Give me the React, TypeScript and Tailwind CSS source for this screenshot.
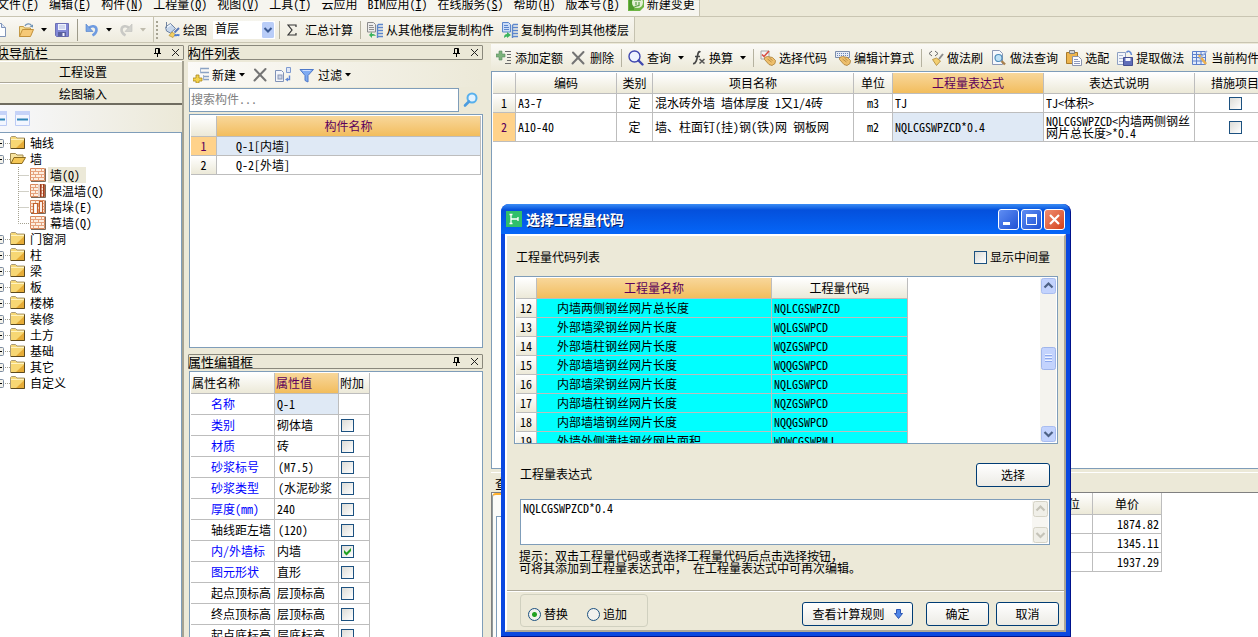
import React from "react";

/* ---------- icons ---------- */

const Svg = ({ children, w = 16, h = 16 }: { children: React.ReactNode; w?: number; h?: number }) => (
  <svg width={w} height={h} viewBox={`0 0 ${w} ${h}`} className="shrink-0" aria-hidden="true">
    {children}
  </svg>
);

const Arrow = ({ dim = false }: { dim?: boolean }) => (
  <svg width="6" height="4" viewBox="0 0 6 4" className="shrink-0" aria-hidden="true">
    <path d="M0 0h6L3 3.5z" fill={dim ? "#c0bcae" : "#000"} />
  </svg>
);

const NewIcon = () => (
  <Svg>
    <path d="M2.500 1.500h7l4 4v9h-11z" fill="#fdfeff" stroke="#7f93b8" />
    <path d="M9.500 1.500v4h4" fill="#dde6f6" stroke="#7f93b8" />
  </Svg>
);
const OpenIcon = () => (
  <Svg>
    <path d="M1.500 14.500v-10h4l1 1.500h6v3" fill="#f7dc8b" stroke="#c49a48" />
    <path d="M1.500 14.500l3-7h11l-3 7z" fill="#f6c976" stroke="#c2913a" />
    <path d="M7 4c1-2.500 5-3 6.500-.5" fill="none" stroke="#6f93b5" strokeWidth="1.300" />
    <path d="M11.500 4.500l3.500-2v3z" fill="#6f93b5" />
  </Svg>
);
const SaveIcon = () => (
  <Svg>
    <path d="M1.500 1.500h13v13h-12l-1-1z" fill="#8288d6" stroke="#6c70b4" />
    <rect x="4" y="2" width="8" height="6" fill="#eef2fc" />
    <path d="M5 4h6M5 6h6" stroke="#b4bde0" />
    <rect x="4" y="10" width="8" height="4.500" fill="#5a619f" />
    <rect x="8.500" y="11" width="2" height="3" fill="#f3f4ff" />
  </Svg>
);
const UndoIcon = ({ dim = false }: { dim?: boolean }) => (
  <Svg w={14}>
    <g transform={dim ? "translate(14 0) scale(-1 1)" : undefined}>
      <path d="M3.500 6.500C6 3 11.500 3.500 11.500 8c0 2.500-1.500 4-4 5.500" fill="none" stroke={dim ? "#c9c9c5" : "#6f9be0"} strokeWidth="2.600" />
      <path d="M1 2v7.500h7z" fill={dim ? "#d2d2cd" : "#7ba6e6"} stroke={dim ? "#c0c0bc" : "#4d7cc7"} strokeWidth=".6" />
    </g>
  </Svg>
);
const PaintIcon = () => (
  <Svg>
    <path d="M1.500 5l5-3.500 5 5-5 4.500-4-2z" fill="#c6d6ea" stroke="#6d83a4" />
    <path d="M2 6l5-3.500" stroke="#f2f7fd" strokeWidth="1.300" />
    <path d="M2.500 0v6" stroke="#70839f" />
    <path d="M10.500 10.500l4.500-4.500" stroke="#5a78b8" strokeWidth="2" />
    <path d="M5 13.500l3-3.500 3.500 2.500-2.500 3z" fill="#f2cf63" stroke="#b18c30" strokeWidth=".7" />
    <path d="M10.500 13c2 1 3-1 5 .5" stroke="#4d7cd0" strokeWidth="2" fill="none" />
  </Svg>
);
const CopyFloorIcon = ({ to = false }: { to?: boolean }) => (
  <Svg>
    <path d="M.5.500h6l2 2v7.500H.5z" fill={to ? "#c9dcf8" : "#ececec"} stroke={to ? "#5b86cc" : "#8b8b8b"} />
    <path d="M2 3.500h4M2 5.500h5M2 7.500h5" stroke={to ? "#5b86cc" : "#8d8d8d"} />
    <path d="M10.500 3v13M16 2.500h-4.500l-1 1M16 5.500h-5.500M16 8.500h-5.500M16 11.500h-5.500M16 14.500h-5.500" stroke="#5b86cc" strokeWidth="1.400" fill="none" />
    <path d={to ? "M9 13l-4-3v2c-2 0-3 1-3 4 1-1 2-1.500 3-1.500V16z" : "M2 13l3-3v2c2 0 3 .5 4 2-1-.5-2.500-.5-4 0v2z"} fill="#3bb45f" />
  </Svg>
);
const ChangeIcon = () => (
  <Svg>
    <path d="M0 0h16v11l-4 4H0z" fill="#6db544" />
    <path d="M1 1h5v13H1z" fill="#4e9a2c" />
    <circle cx="9.500" cy="6.500" r="5.500" fill="#e3f1d4" />
    <path d="M6 4h7M8 6v3M11 6v3M6.500 10.500l5-1M7 2.500h5" stroke="#3f8c26" />
  </Svg>
);
const NewComponentIcon = () => (
  <Svg>
    <path d="M7 1.500h9M7 5.500h9M10 9.500h6M10 12.500h6" stroke="#8ba3c4" strokeWidth="1.400" />
    <path d="M7.500 1v5M10.500 8v5" stroke="#9fb3cf" />
    <path d="M3 8h3v3h3v3H6v2H3v-2H0v-3h3z" fill="#f4d34b" stroke="#a98820" strokeWidth=".8" />
  </Svg>
);
const CrossIcon = ({ w = 16 }: { w?: number }) => (
  <Svg w={w}>
    <path d="M2 2.500l10.500 11M12.500 2L1.500 13.500" stroke="#747474" strokeWidth="2" strokeLinecap="round" />
  </Svg>
);
const DuplicateIcon = () => (
  <Svg>
    <path d="M.5 3.500h6l2 2v9h-8z" fill="#f4f6fb" stroke="#8093b8" />
    <rect x="3" y="8" width="4" height="4" fill="#c9d3e6" stroke="#8b98b6" />
    <path d="M11.500.500h4v5h-4z" fill="#dfe7f6" stroke="#7f9bd0" />
    <path d="M12 12.500h2.500v-4" stroke="#5f86d4" fill="none" strokeWidth="1.400" />
    <path d="M10 12.500l3-2v4z" fill="#5f86d4" />
  </Svg>
);
const FunnelIcon = () => (
  <Svg>
    <path d="M1 2.500h13.500L9 8.500v6.500l-3-1.500v-5z" fill="#7fabf2" stroke="#4f79c8" />
    <path d="M3.500 3.500h8" stroke="#cfe0ff" />
  </Svg>
);
const SearchIcon = ({ color = "#3a62b8" }: { color?: string }) => (
  <Svg>
    <circle cx="6.500" cy="6.500" r="5.500" fill="#eef4ff" stroke={color} strokeWidth="1.400" />
    <path d="M10.500 10.500l4 4" stroke={color} strokeWidth="2.400" strokeLinecap="round" />
  </Svg>
);
const SearchBoxIcon = () => (
  <Svg>
    <circle cx="9" cy="6" r="4.500" fill="#e2f2ff" stroke="#58b0ec" strokeWidth="2" />
    <path d="M6 9.500l-4 4" stroke="#4c9cdf" strokeWidth="2.600" strokeLinecap="round" />
  </Svg>
);
const AddQuotaIcon = () => (
  <Svg>
    <path d="M3 1h3v3h3v3H6v3H3V7H0V4h3z" fill="#7db27c" stroke="#5b8f63" strokeWidth=".6" />
    <path d="M9 1.500h6M11 4.500h4M11 7.500h4M11 10.500h4M9 13.500h6" stroke="#6b6b6b" />
  </Svg>
);
const FxIcon = () => (
  <Svg w={14}>
    <path d="M8.500 2C6.500 1 6 3 5.500 6S4 14 1 13.500M3 6.500h5" stroke="#474747" strokeWidth="1.700" fill="none" />
    <path d="M7.500 9l5 4.500M12.500 9l-5 4.500" stroke="#555" strokeWidth="1.600" />
  </Svg>
);
const Hand = () => (
  <g>
    <path d="M4.500 7.500l3-1 5 1 3 3-.5 3-3 2-3-1-4.500-5z" fill="#eebf6c" stroke="#a97d35" strokeWidth=".8" />
    <path d="M7.500 9l4 3M9.500 8l3 2.500" stroke="#a97d35" strokeWidth=".7" />
  </g>
);
const PickCodeIcon = () => (
  <Svg>
    <path d="M1 1h8v8H1z" fill="#f3f3f3" stroke="#a5a5a5" />
    <path d="M2 4.500l2 2 5-5.500" stroke="#d8493c" strokeWidth="1.500" fill="none" />
    <Hand />
  </Svg>
);
const EditExprIcon = () => (
  <Svg>
    <path d="M.5 1.500h14v6H.5z" fill="#e7ecf6" stroke="#7c8dab" />
    <path d="M2 3.500h11M2 5.500h11" stroke="#6d86b8" strokeDasharray="1 1" />
    <Hand />
  </Svg>
);
const BrushIcon = () => (
  <Svg>
    <path d="M4 1L1 3.500 4 6M7 1l3 2.500L7 6" stroke="#666" fill="none" />
    <path d="M15 4l-4 5" stroke="#8b8b8b" strokeWidth="2" />
    <path d="M4.500 9.500l4-1.500 4 3-4 4.500z" fill="#f3cf71" stroke="#ae8734" strokeWidth=".8" />
  </Svg>
);
const LookupIcon = () => (
  <Svg>
    <path d="M1.500.500h7l3 3v11h-10z" fill="#f6f8fd" stroke="#8b98b5" />
    <circle cx="7.500" cy="8" r="3.500" fill="#bfe1f6" stroke="#4f8cb8" strokeWidth="1.200" />
    <path d="M10.500 11l3.500 3.500" stroke="#a8814e" strokeWidth="2.400" />
  </Svg>
);
const ClipboardIcon = () => (
  <Svg>
    <path d="M.5 2.500h11v11H.5z" fill="#edb54e" stroke="#a97a2a" />
    <path d="M3.500.500h5v3h-5z" fill="#d3d3d3" stroke="#808080" />
    <path d="M6.500 6.500h6l3 3v6h-9z" fill="#fdfdff" stroke="#8a93ad" />
    <path d="M8 9.500h4M8 11.500h6M8 13.500h6" stroke="#8d99bd" />
  </Svg>
);
const ExtractIcon = () => (
  <Svg>
    <path d="M.5 2.500h8v12h-8z" fill="#f2f5fb" stroke="#8ea0c2" />
    <path d="M2 5.500h4M2 8.500h4M2 11.500h4" stroke="#a8b5d0" />
    <path d="M9.500 2.500C11 .5 14 1 14.500 5" stroke="#5f86d4" strokeWidth="1.500" fill="none" />
    <path d="M6.500 7.500h9v8h-9z" fill="#5f6db8" stroke="#434d91" />
    <path d="M8.500 8h5v3h-5z" fill="#f3f5ff" />
  </Svg>
);
const CurrentIcon = () => (
  <Svg>
    <path d="M.5 1.500h13v13H.5z" fill="#e4ecfb" stroke="#5d80cc" />
    <path d="M.5 4.500h13M.5 7.500h13M.5 11h13M4.500 1.500v13M9 1.500v13" stroke="#5d80cc" />
    <path d="M7 5l7 9" stroke="#edb04e" strokeWidth="2.600" />
    <path d="M15 1L7 9" stroke="#9db3dc" strokeWidth="1.500" />
  </Svg>
);

const FolderIcon = () => (
  <Svg>
    <path d="M.5 13.500v-11l1-1h4l1.500 1.500h7.500v10.500z" fill="#f6d878" stroke="#a89a78" />
    <path d="M1 4.500h13.500v8.500H1z" fill="#f7d774" />
    <path d="M6 13L14.500 5v8z" fill="#e6ac38" />
    <path d="M1 4.500h13" stroke="#fff3bf" />
    <path d="M1 13.500h13.500v-10" stroke="#5c4a20" fill="none" />
  </Svg>
);
const FolderOpenIcon = () => (
  <Svg>
    <path d="M.5 12.500v-10h5l1.500 1.500h6v3" fill="#f7e3a0" stroke="#a08a50" />
    <path d="M1 12.500l3-6h11.500l-3.500 6z" fill="#f4c654" stroke="#8a6a1e" />
  </Svg>
);
const WallIcon = ({ kind }: { kind: string }) => (
  <Svg>
    <path d="M.5 1.500h14v12H.5z" fill="#fdeee0" stroke="#d9885c" />
    <path d="M.5 4.500h14M.5 7.500h14M.5 10.500h14M5.500 1.500v3M11.500 1.500v3M3.500 4.500v3M8.500 4.500v3M5.500 7.500v3M11.500 7.500v3M3.500 10.500v3M8.500 10.500v3" stroke="#e5a37e" />
    <path d="M1 14.500h14.500v-13" stroke="#7b6a5a" fill="none" />
    {kind === "insulated" && (
      <g>
        <path d="M8 1h2v13H8z" fill="#e8d0c4" />
        <path d="M10 1h1.500v13H10zM13 1h1.500v13H13z" fill="#9a3a1e" />
      </g>
    )}
    {kind === "pier" && <path d="M3.500 4.500h4v10h-4zM9.500 2.500h3v11h-3z" fill="#fff" stroke="#c2602c" strokeWidth="1.200" />}
  </Svg>
);
const PinIcon = () => (
  <Svg w={9} h={9}>
    <path d="M2.500.500h4v5M2.500.500v5M5.500.500v5M1 5.500h7M4.500 5.500v3.500" stroke="#000" fill="none" />
  </Svg>
);
const CloseIcon = () => (
  <Svg w={9} h={9}>
    <path d="M1 1l7 7M8 1L1 8" stroke="#222" />
  </Svg>
);

/* ---------- shared controls ---------- */

const Check = ({ checked = false, label }: { checked?: boolean; label: string }) => (
  <span className="relative block size-[13px] shrink-0">
    <input
      type="checkbox"
      defaultChecked={checked}
      aria-label={label}
      className="peer block size-[13px] appearance-none border border-[#1c5180] bg-linear-to-br from-[#dcdcd7] to-white"
    />
    <svg viewBox="0 0 13 13" className="pointer-events-none absolute inset-0 hidden size-[13px] peer-checked:block" aria-hidden="true">
      <path d="M3 5v3l2.500 2.500L10 6V3L5.500 7.500z" fill="#21a121" />
    </svg>
  </span>
);

const Sep = () => <span className="-ml-px -mr-0.5 h-[18px] w-px shrink-0 bg-[#b5b2a0]" />;

const Tool = ({ icon, text, menu }: { icon: React.ReactNode; text: string; menu?: "near" | "far" }) => (
  <button type="button" className="flex shrink-0 items-center gap-[3px]">
    {icon}
    <span>{text}</span>
    {menu && (
      <span className={menu === "far" ? "ml-1" : ""}>
        <Arrow />
      </span>
    )}
  </button>
);

const PanelTitle = ({ text, cut = false }: { text: string; cut?: boolean }) => (
  <header className="flex h-[15px] shrink-0 items-center justify-between rounded-[1px] border border-[#8a887c] bg-[#ebe8d7] pr-[3px]">
    <h2 className={cut ? "-ml-[5px] text-[13px] leading-[13px]" : "-ml-px text-[13px] leading-[13px]"}>{text}</h2>
    <span className="flex items-center gap-[9px]">
      <button type="button" aria-label="固定">
        <PinIcon />
      </button>
      <button type="button" aria-label="关闭">
        <CloseIcon />
      </button>
    </span>
  </header>
);

const HEAD = "border-r border-b border-[#bdbdbd] bg-linear-to-b from-white to-[#ece9d8] p-0 font-normal";
const HEAD_ACTIVE = "border-r border-b border-[#bdbdbd] bg-linear-to-b from-[#f8d79a] to-[#f2bd5c] p-0 font-normal text-[#5c005c]";
const CELL = "border-r border-b border-[#bdbdbd] p-0";
const ROWNO = "border-r border-b border-[#bdbdbd] bg-linear-to-b from-white to-[#ece9d8] p-0 text-center font-normal";
const ROWNO_ACTIVE = "border-r border-b border-[#bdbdbd] bg-[#ffd28a] p-0 text-center font-normal text-[#5c005c]";
const TABLE = "table-fixed border-separate border-spacing-0";

/* ---------- data ---------- */

const menus: [string, string][] = [
  ["文件", "F"],
  ["编辑", "E"],
  ["构件", "N"],
  ["工程量", "Q"],
  ["视图", "V"],
  ["工具", "T"],
  ["云应用", ""],
  ["BIM应用", "I"],
  ["在线服务", "S"],
  ["帮助", "H"],
  ["版本号", "B"],
];

type Node = { name: string; children?: { name: string; kind: string; selected?: boolean }[] };
const tree: Node[] = [
  { name: "轴线" },
  {
    name: "墙",
    children: [
      { name: "墙(Q)", kind: "wall", selected: true },
      { name: "保温墙(Q)", kind: "insulated" },
      { name: "墙垛(E)", kind: "pier" },
      { name: "幕墙(Q)", kind: "wall" },
    ],
  },
  { name: "门窗洞" },
  { name: "柱" },
  { name: "梁" },
  { name: "板" },
  { name: "楼梯" },
  { name: "装修" },
  { name: "土方" },
  { name: "基础" },
  { name: "其它" },
  { name: "自定义" },
];

type Prop = { name: string; value: string; blue: boolean; check?: boolean };
const props: Prop[] = [
  { name: "名称", value: "Q-1", blue: true },
  { name: "类别", value: "砌体墙", blue: true, check: false },
  { name: "材质", value: "砖", blue: true, check: false },
  { name: "砂浆标号", value: "(M7.5)", blue: true, check: false },
  { name: "砂浆类型", value: "(水泥砂浆", blue: true, check: false },
  { name: "厚度(mm)", value: "240", blue: true, check: false },
  { name: "轴线距左墙", value: "(120)", blue: false, check: false },
  { name: "内/外墙标", value: "内墙", blue: true, check: true },
  { name: "图元形状", value: "直形", blue: true, check: false },
  { name: "起点顶标高", value: "层顶标高", blue: false, check: false },
  { name: "终点顶标高", value: "层顶标高", blue: false, check: false },
  { name: "起点底标高", value: "层底标高", blue: false, check: false },
];

const quotas = [
  { code: "A3-7", name: "混水砖外墙 墙体厚度 1又1/4砖", unit: "m3", expr: "TJ", note: "TJ<体积>" },
  { code: "A10-40", name: "墙、柱面钉(挂)钢(铁)网 钢板网", unit: "m2", expr: "NQLCGSWPZCD*0.4", note: "NQLCGSWPZCD<内墙两侧钢丝网片总长度>*0.4" },
];

const codes: [number, string, string][] = [
  [12, "内墙两侧钢丝网片总长度", "NQLCGSWPZCD"],
  [13, "外部墙梁钢丝网片长度", "WQLGSWPCD"],
  [14, "外部墙柱钢丝网片长度", "WQZGSWPCD"],
  [15, "外部墙墙钢丝网片长度", "WQQGSWPCD"],
  [16, "内部墙梁钢丝网片长度", "NQLGSWPCD"],
  [17, "内部墙柱钢丝网片长度", "NQZGSWPCD"],
  [18, "内部墙墙钢丝网片长度", "NQQGSWPCD"],
  [19, "外墙外侧满挂钢丝网片面积", "WQWCGSWPMJ"],
];

const prices = ["1874.82", "1345.11", "1937.29"];

/* ---------- regions ---------- */

const MenuBar = () => (
  <nav className="flex h-[17px] shrink-0 border-b border-[#c9c5b2]">
    <div className="flex shrink-0 gap-2 overflow-hidden border-r border-[#c5c2b0] bg-[#f6f5ef] pr-1">
      <ul className="-ml-[3px] -mt-1 flex shrink-0 gap-[10px]">
        {menus.map(([name, key]) => (
          <li key={name}>
            <button type="button" className="leading-4">
              {name}
              {key && (
                <>
                  (<u>{key}</u>)
                </>
              )}
            </button>
          </li>
        ))}
      </ul>
      <button type="button" className="-mt-1 flex h-4 shrink-0 items-center gap-[3px] leading-4">
        <ChangeIcon />
        新建变更
      </button>
    </div>
  </nav>
);

const MainToolbar = () => (
  <div className="flex h-[26px] shrink-0 border-b border-[#c9c5b2]">
    <div className="flex w-[154px] shrink-0 items-center overflow-hidden border-r border-[#c5c2b0] bg-linear-to-b from-[#faf9f5] to-[#eeebdd]">
      <button type="button" aria-label="新建" className="-ml-2">
        <NewIcon />
      </button>
      <button type="button" aria-label="打开" className="ml-[10px] flex items-center gap-[7px]">
        <OpenIcon />
        <Arrow />
      </button>
      <button type="button" aria-label="保存" className="ml-[7px]">
        <SaveIcon />
      </button>
      <span className="ml-[7px] h-[22px] w-px bg-[#9d9a8a]" />
      <button type="button" aria-label="撤销" className="ml-[7px] flex items-center gap-[7px]">
        <UndoIcon />
        <Arrow />
      </button>
      <button type="button" aria-label="重做" className="ml-[7px] flex items-center gap-[7px]">
        <UndoIcon dim />
        <Arrow dim />
      </button>
    </div>
    <div className="flex shrink-0 items-center gap-2 border-r border-[#c5c2b0] bg-linear-to-b from-[#f7f6f0] to-[#eeebdd] pl-0.5 pr-[5px]">
      <span className="-mr-0.5 h-[18px] border-l-2 border-dotted border-[#a7a493]" />
      <Tool icon={<PaintIcon />} text="绘图" />
      <span className="relative -ml-0.5 flex">
        <select aria-label="楼层" className="h-[18px] w-[62px] appearance-none bg-white pb-[3px] pl-0.5 leading-[14px]">
          <option>首层</option>
        </select>
        <svg width="12" height="16" viewBox="0 0 12 16" className="pointer-events-none absolute right-px top-px" aria-hidden="true">
          <rect width="12" height="16" rx="1.500" fill="#b9cdf8" />
          <path d="M2.500 6L6 9.500 9.500 6" stroke="#3b5a94" strokeWidth="2" fill="none" />
        </svg>
      </span>
      <span className="-ml-1 -mr-px h-[18px] w-px bg-[#b5b2a0]" />
      <button type="button" className="flex items-center gap-2">
        <Svg w={10} h={12}>
          <path d="M9 3V1H1l4 5-4 5h8V9" stroke="#333" strokeWidth="1.200" fill="none" />
        </Svg>
        汇总计算
      </button>
      <Sep />
      <Tool icon={<CopyFloorIcon />} text="从其他楼层复制构件" />
      <Tool icon={<CopyFloorIcon to />} text="复制构件到其他楼层" />
    </div>
  </div>
);

const Expander = ({ open }: { open: boolean }) => (
  <svg width="15" height="16" viewBox="0 0 15 16" className="-ml-[5px] shrink-0" aria-hidden="true">
    <rect x=".5" y="4.500" width="8" height="8" rx="1" fill="#f4f2ea" stroke="#7b8ba0" />
    <path d={open ? "M2 8.500h5" : "M2 8.500h5M4.500 6v5"} stroke="#000" />
    <path d="M10 8.500h5" stroke="#a3a08f" strokeDasharray="1 1" />
  </svg>
);

const NavPanel = () => (
  <aside className="flex w-[184px] shrink-0 flex-col pt-[2px]">
    <PanelTitle text="块导航栏" cut />
    <div className="mt-px flex grow flex-col overflow-hidden border-r-2 border-[#a5a292]">
      <button type="button" className="h-[22px] shrink-0 border-b border-[#aca899] border-t border-t-white bg-[#ece9d8] pr-4">
        工程设置
      </button>
      <button type="button" className="h-[22px] shrink-0 border-b-2 border-[#6f6c60] border-t border-t-white bg-[#ece9d8] pr-4">
        绘图输入
      </button>
      <div className="flex h-[28px] shrink-0 items-center gap-2 border-b border-[#7f9db9] bg-linear-to-r from-[#f7f8fc] to-[#ece9d8]">
        {["全部展开", "全部折叠"].map((label, i) => (
          <button key={label} type="button" aria-label={label} className={i === 0 ? "-ml-2" : ""}>
            <Svg w={15} h={15}>
              <path d="M.5.500h14v14H.5z" fill="#f3f6ff" stroke="#bccbf5" />
              <path d="M0 0h15v4H0z" fill="#c6d3f8" />
              <path d="M2 8.500h11" stroke="#2f86b8" strokeWidth="2" />
            </Svg>
          </button>
        ))}
      </div>
      <ul className="grow border-r border-[#7f9db9] bg-white pt-[2px]">
        {tree.map((node) => (
          <li key={node.name}>
            <div className="flex h-4 items-center">
              <Expander open={!!node.children} />
              {node.children ? <FolderOpenIcon /> : <FolderIcon />}
              <span className="ml-1">{node.name}</span>
            </div>
            {node.children && (
              <ul className="ml-[18px]">
                {node.children.map((c, i) => (
                  <li key={c.name} className="flex h-4 items-center">
                    <svg width="12" height="16" viewBox="0 0 12 16" className="shrink-0" aria-hidden="true">
                      <path d={i === 3 ? "M.5 0v8.500H11" : "M.5 0v16M.5 8.500H11"} stroke="#a3a08f" strokeDasharray="1 1" fill="none" />
                    </svg>
                    <WallIcon kind={c.kind} />
                    <span className={c.selected ? "ml-0.5 bg-[#ece9d8] pl-0.5 pr-1.5 leading-4" : "ml-1 leading-4"}>{c.name}</span>
                  </li>
                ))}
              </ul>
            )}
          </li>
        ))}
      </ul>
    </div>
  </aside>
);

const ComponentPanel = () => (
  <section className="flex w-[295px] shrink-0 flex-col pt-[2px]">
    <PanelTitle text="构件列表" />
    <div className="mt-0.5 flex h-[25px] shrink-0 items-center gap-2 bg-linear-to-r from-[#fbfaf7] to-[#ece9d8] pl-[5px]">
      <Tool icon={<NewComponentIcon />} text="新建" menu="near" />
      <button type="button" aria-label="删除">
        <CrossIcon w={14} />
      </button>
      <button type="button" aria-label="复制">
        <DuplicateIcon />
      </button>
      <Tool icon={<FunnelIcon />} text="过滤" menu="near" />
    </div>
    <div className="mt-px flex h-[24px] shrink-0">
      <input
        type="text"
        aria-label="搜索构件"
        placeholder="搜索构件..."
        className="ml-px w-[270px] border border-[#7f9db9] bg-white px-px pb-[3px] placeholder:text-[#808080]"
      />
      <button type="button" aria-label="搜索" className="flex grow items-center justify-center">
        <SearchBoxIcon />
      </button>
    </div>
    <div className="ml-px mt-[2px] h-[234px] shrink-0 border border-[#7f9db9] bg-white p-px">
      <table className={`${TABLE} w-full`}>
        <colgroup>
          <col className="w-[26px]" />
          <col />
        </colgroup>
        <thead>
          <tr className="h-[21px]">
            <th className={HEAD} />
            <th className={HEAD_ACTIVE}>构件名称</th>
          </tr>
        </thead>
        <tbody>
          <tr className="h-[19px]">
            <th className={ROWNO_ACTIVE}>1</th>
            <td className={`${CELL} bg-[#dfe9f5] pl-[19px]`}>Q-1[内墙]</td>
          </tr>
          <tr className="h-[19px]">
            <th className={ROWNO}>2</th>
            <td className={`${CELL} pl-[19px]`}>Q-2[外墙]</td>
          </tr>
        </tbody>
      </table>
    </div>
    <div className="h-[6px] shrink-0" />
    <PanelTitle text="属性编辑框" />
    <div className="ml-px mt-0.5 min-h-0 grow overflow-hidden border border-b-0 border-[#7f9db9] bg-white p-px">
      <table className={`${TABLE} w-[179px]`}>
        <colgroup>
          <col className="w-[84px]" />
          <col className="w-[64px]" />
          <col className="w-[31px]" />
        </colgroup>
        <thead>
          <tr className="h-[21px]">
            <th className={`${HEAD} pl-px text-left`}>属性名称</th>
            <th className={`${HEAD_ACTIVE} pl-px text-left`}>属性值</th>
            <th className={`${HEAD} pl-px text-left`}>附加</th>
          </tr>
        </thead>
        <tbody>
          {props.map((p, i) => (
            <tr key={p.name} className="h-[21px]">
              <td className={`${CELL} whitespace-nowrap pl-5 ${p.blue ? "text-[#0000ff]" : ""}`}>{p.name}</td>
              <td className={`${CELL} whitespace-nowrap ${p.value.startsWith("(") ? "pl-[3px]" : "pl-0.5"} ${i === 0 ? "bg-[#dfe9f5]" : ""}`}>{p.value}</td>
              <td className={`${CELL} pl-0.5`}>{p.check !== undefined && <Check checked={p.check} label={`${p.name}附加`} />}</td>
            </tr>
          ))}
        </tbody>
      </table>
    </div>
  </section>
);

const QuotaPanel = () => (
  <section className="flex min-w-0 grow flex-col pt-px">
    <div className="flex h-[27px] shrink-0 items-center gap-2 overflow-hidden bg-linear-to-b from-[#fbfaf7] to-[#ece9d8] pl-[5px]">
      <Tool icon={<AddQuotaIcon />} text="添加定额" />
      <Tool icon={<CrossIcon />} text="删除" />
      <Sep />
      <Tool icon={<SearchIcon color="#4048b0" />} text="查询" menu="far" />
      <Tool icon={<FxIcon />} text="换算" menu="far" />
      <Sep />
      <Tool icon={<PickCodeIcon />} text="选择代码" />
      <Tool icon={<EditExprIcon />} text="编辑计算式" />
      <Sep />
      <Tool icon={<BrushIcon />} text="做法刷" />
      <Tool icon={<LookupIcon />} text="做法查询" />
      <Tool icon={<ClipboardIcon />} text="选配" />
      <Tool icon={<ExtractIcon />} text="提取做法" />
      <Tool icon={<CurrentIcon />} text="当前构件" />
    </div>
    <div className="min-h-0 grow overflow-hidden border border-r-0 border-[#7f9db9] bg-white pl-px pt-px">
      <table className={`${TABLE} w-[783px]`}>
        <colgroup>
          <col className="w-[23px]" />
          <col className="w-[101px]" />
          <col className="w-[36px]" />
          <col className="w-[201px]" />
          <col className="w-[39px]" />
          <col className="w-[151px]" />
          <col className="w-[151px]" />
          <col className="w-[81px]" />
        </colgroup>
        <thead>
          <tr className="h-[21px]">
            <th className={HEAD} />
            <th className={HEAD}>编码</th>
            <th className={HEAD}>类别</th>
            <th className={HEAD}>项目名称</th>
            <th className={HEAD}>单位</th>
            <th className={HEAD_ACTIVE}>工程量表达式</th>
            <th className={HEAD}>表达式说明</th>
            <th className={HEAD}>措施项目</th>
          </tr>
        </thead>
        <tbody>
          {quotas.map((q, i) => (
            <tr key={q.code} className={i === 0 ? "h-[19px]" : "h-[29px]"}>
              <th className={i === 1 ? ROWNO_ACTIVE : ROWNO}>{i + 1}</th>
              <td className={`${CELL} pl-0.5`}>{q.code}</td>
              <td className={`${CELL} text-center`}>定</td>
              <td className={`${CELL} whitespace-nowrap pl-0.5`}>{q.name}</td>
              <td className={`${CELL} text-center`}>{q.unit}</td>
              <td className={`${CELL} pl-0.5 ${i === 1 ? "bg-[#dfe9f5]" : ""}`}>{q.expr}</td>
              <td className={`${CELL} break-all pl-0.5 leading-3`}>{q.note}</td>
              <td className={CELL}>
                <span className="flex justify-center">
                  <Check label={`${q.code}措施项目`} />
                </span>
              </td>
            </tr>
          ))}
        </tbody>
      </table>
    </div>
    <div className="mt-[3px] flex h-[21px] shrink-0 items-center border-b border-t border-b-[#808080] border-t-white pl-1">
      <h2 className="text-[13px]">查询</h2>
    </div>
    <div className="flex h-[144px] shrink-0 border-l border-[#808080] bg-white">
      <div className="flex w-[533px] shrink-0 flex-col rounded-tl-sm border-l border-t-2 border-l-[#919b9c] border-t-[#ffb02b] bg-[#fbfbf8] pl-[3px] pt-[21px]">
        <div className="grow border-l border-t border-[#7f9db9] bg-white" />
      </div>
      <table className={`${TABLE} w-[137px] self-start`}>
        <colgroup>
          <col />
          <col className="w-[69px]" />
        </colgroup>
        <thead>
          <tr className="h-[22px]">
            <th className={`${HEAD} pr-3 text-right`}>单位</th>
            <th className={HEAD}>单价</th>
          </tr>
        </thead>
        <tbody>
          {prices.map((p) => (
            <tr key={p} className="h-[19px]">
              <td className={CELL} />
              <td className={`${CELL} pr-0.5 text-right`}>{p}</td>
            </tr>
          ))}
        </tbody>
      </table>
    </div>
  </section>
);

const XpButton = ({ className, children }: { className: string; children: React.ReactNode }) => (
  <button
    type="button"
    className={`flex h-[24px] shrink-0 items-center justify-center gap-[9px] rounded-[3px] border border-[#003c74] bg-linear-to-b from-white to-[#ecebe5] ${className}`}
  >
    {children}
  </button>
);

const Chevron = ({ up = false, dim = false }: { up?: boolean; dim?: boolean }) => (
  <svg width="15" height="16" viewBox="0 0 15 16" className="shrink-0" aria-hidden="true">
    <rect x=".5" y=".5" width="14" height="15" rx="2" fill={dim ? "#f0efe8" : "#c3d3fd"} stroke={dim ? "#d5d3c6" : "#a9bdf0"} />
    <path d={up ? "M3.500 9.500l4-4 4 4" : "M3.500 6l4 4 4-4"} stroke={dim ? "#c5c3b8" : "#4d6185"} strokeWidth="2.200" fill="none" />
  </svg>
);

const TITLE_BUTTON = "flex size-[21px] items-center justify-center rounded-[3px] border border-white";

const CodeDialog = () => (
  <div
    role="dialog"
    aria-label="选择工程量代码"
    className="absolute left-[501px] top-[204px] flex h-[433px] w-[570px] flex-col rounded-t-lg border-b border-r border-[#00138c] bg-[#0a48e0]"
  >
    <header className="flex h-[30px] shrink-0 items-center rounded-t-lg bg-linear-to-b from-[#3b8df5] via-[#0450dc] via-20% to-[#0566f8] px-[5px]">
      <Svg>
        <rect width="16" height="16" fill="#2fbf6b" />
        <path d="M3.500 3.500h3M3.500 12.500h3M5 3.500v9M5 8h7M12 6v4" stroke="#fff" strokeWidth="1.300" fill="none" />
      </Svg>
      <h1 className="ml-1 text-sm font-bold text-white [text-shadow:1px_1px_0_#0a246a]">选择工程量代码</h1>
      <span className="ml-auto flex gap-[2px]">
        <button type="button" aria-label="最小化" className={`${TITLE_BUTTON} bg-linear-to-br from-[#5f8df3] to-[#1f51d4]`}>
          <Svg w={13} h={13}>
            <path d="M1 9h7v3H1z" fill="#fff" />
          </Svg>
        </button>
        <button type="button" aria-label="最大化" className={`${TITLE_BUTTON} bg-linear-to-br from-[#5f8df3] to-[#1f51d4]`}>
          <Svg w={13} h={13}>
            <path d="M1.500 1.500h10v10h-10z" stroke="#fff" fill="none" />
            <path d="M1 1h11v3H1z" fill="#fff" />
          </Svg>
        </button>
        <button type="button" aria-label="关闭" className={`${TITLE_BUTTON} bg-linear-to-br from-[#ee8d70] to-[#d43e12]`}>
          <Svg w={13} h={13}>
            <path d="M2 2l9 9M11 2l-9 9" stroke="#fff" strokeWidth="2.200" />
          </Svg>
        </button>
      </span>
    </header>
    <div className="mx-[4px] mb-[4px] flex min-h-0 grow flex-col border-2 border-[#aca899] border-l-white border-t-white bg-[#ece9d8]">
      <div className="flex h-10 shrink-0 items-center justify-between pl-[9px] pr-[14px] pt-0.5">
        <h2>工程量代码列表</h2>
        <label className="flex items-center gap-[3px]">
          <Check label="显示中间量" />
          显示中间量
        </label>
      </div>
      <div className="ml-[7px] mr-[6px] flex h-[168px] shrink-0 justify-between overflow-hidden border border-[#7f9db9] bg-white p-px">
        <table className={`${TABLE} w-[392px] self-start`}>
          <colgroup>
            <col className="w-[21px]" />
            <col className="w-[235px]" />
            <col className="w-[136px]" />
          </colgroup>
          <thead>
            <tr className="h-[21px]">
              <th className={HEAD} />
              <th className={HEAD_ACTIVE}>工程量名称</th>
              <th className={HEAD}>工程量代码</th>
            </tr>
          </thead>
          <tbody>
            {codes.map(([n, name, code]) => (
              <tr key={n} className="h-[19px]">
                <th className={ROWNO}>{n}</th>
                <td className={`${CELL} bg-[#00ffff] pl-5`}>{name}</td>
                <td className={`${CELL} bg-[#00ffff] pl-0.5`}>{code}</td>
              </tr>
            ))}
          </tbody>
        </table>
        <div className="flex w-[16px] flex-col items-center justify-between bg-[#f4f3ee]">
          <Chevron up />
          <svg width="15" height="23" viewBox="0 0 15 23" className="mb-1" aria-hidden="true">
            <rect x=".5" y=".5" width="14" height="22" rx="2" fill="#c3d3fd" stroke="#9fb5ea" />
            <path d="M4 8.500h7M4 11.500h7M4 14.500h7" stroke="#8ca8ee" />
            <path d="M4 7.500h7M4 10.500h7M4 13.500h7" stroke="#eef3ff" />
          </svg>
          <Chevron />
        </div>
      </div>
      <div className="mt-[19px] flex h-[24px] shrink-0 items-center justify-between pl-[13px] pr-[14px]">
        <label htmlFor="expr" className="pb-0.5">
          工程量表达式
        </label>
        <XpButton className="w-[74px]">选择</XpButton>
      </div>
      <div className="ml-[13px] mr-[14px] mt-3 flex h-[46px] shrink-0 border border-[#7f9db9] bg-white p-px">
        <textarea id="expr" defaultValue="NQLCGSWPZCD*0.4" className="grow resize-none overflow-hidden px-px leading-[14px] outline-none" />
        <div className="flex w-[16px] flex-col items-center justify-between bg-[#f7f6f2]">
          <Chevron up dim />
          <Chevron dim />
        </div>
      </div>
      <p className="ml-[12px] mt-[5px] shrink-0 leading-3">
        提示：双击工程量代码或者选择工程量代码后点击选择按钮，
        <br />
        可将其添加到工程量表达式中， 在工程量表达式中可再次编辑。
      </p>
      <div className="mt-[16px] flex grow items-start border-t border-[#aca899] pl-[13px] pr-[5px] pt-[3px] shadow-[inset_0_1px_0_#fff]">
        <fieldset className="flex h-[33px] w-[128px] items-center gap-[19px] rounded-sm border border-[#d0d0bf] pl-[7px] pt-[7px]">
          {["替换", "追加"].map((t, i) => (
            <label key={t} className="flex items-center gap-[3px]">
              <input
                type="radio"
                name="mode"
                defaultChecked={i === 0}
                className="size-[13px] appearance-none rounded-full border border-[#1c5180] bg-[#f2f2ee] checked:bg-[radial-gradient(circle,#21a121_0_2px,#f2f2ee_3px)]"
              />
              {t}
            </label>
          ))}
        </fieldset>
        <div className="ml-auto flex pt-2">
          <XpButton className="w-[111px]">
            查看计算规则
            <Svg w={9} h={10}>
              <path d="M2.500.500h4v4h2L4.500 9.500.5 4.500h2z" fill="#4f86e8" stroke="#2b55b5" />
            </Svg>
          </XpButton>
          <XpButton className="ml-[13px] w-[63px]">确定</XpButton>
          <XpButton className="ml-[7px] w-[63px]">取消</XpButton>
        </div>
      </div>
    </div>
  </div>
);

export default function App() {
  return (
    <div className="relative flex h-screen flex-col overflow-hidden bg-[#ece9d8] font-['Noto_Sans_Mono_CJK_SC','Noto_Sans_CJK_SC',sans-serif] text-[12px] leading-4 text-black">
      <MenuBar />
      <MainToolbar />
      <main className="flex min-h-0 grow">
        <NavPanel />
        <div className="w-1 shrink-0" />
        <ComponentPanel />
        <div className="w-2 shrink-0" />
        <QuotaPanel />
      </main>
      <CodeDialog />
    </div>
  );
}
